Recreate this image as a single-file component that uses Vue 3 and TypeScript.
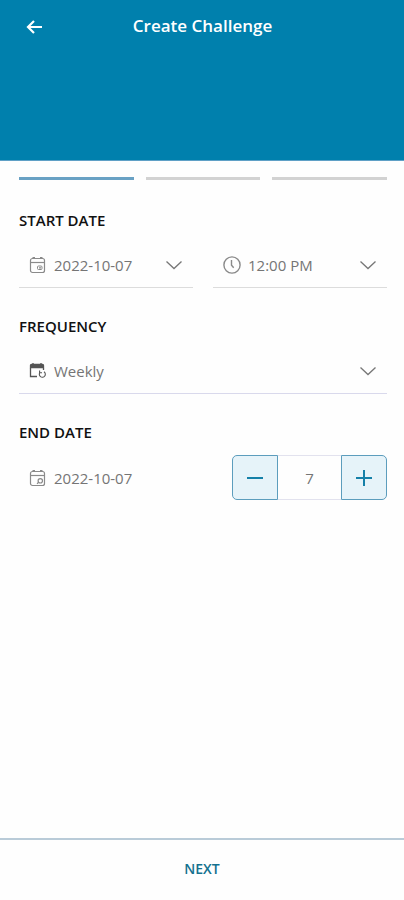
<script setup lang="ts">
import { computed, ref } from 'vue'

const totalSteps = 3
const currentStep = ref<number>(1)

const startDate = ref<string>('2022-10-07')
const startTime = ref<string>('12:00 PM')
const frequency = ref<string>('Weekly')
const endDate = ref<string>('2022-10-07')
const duration = ref<number>(7)

const dates: string[] = ['2022-10-07', '2022-10-08', '2022-10-09']
const times: string[] = ['12:00 PM', '1:00 PM', '2:00 PM']
const frequencies: string[] = ['Daily', 'Weekly', 'Monthly']

const canDecrease = computed<boolean>(() => duration.value > 1)

function changeDuration(amount: number): void {
  duration.value = Math.max(1, duration.value + amount)
}
</script>

<template>
  <div class="screen">
    <header class="header">
      <button class="back" type="button" aria-label="Back">
        <svg width="18" height="16" viewBox="0 0 18 16" fill="none" stroke="currentColor" stroke-width="2.2">
          <path d="M17 8H3M9 2L3 8l6 6" />
        </svg>
      </button>
      <h1 class="title">Create Challenge</h1>
    </header>

    <main class="content">
      <div class="steps" aria-hidden="true">
        <span
          v-for="step in totalSteps"
          :key="step"
          class="step"
          :class="{ active: step === currentStep }"
        ></span>
      </div>

      <section class="group">
        <h2 class="heading">START DATE</h2>
        <div class="fields">
          <label class="field">
            <svg class="icon" width="18" height="18" viewBox="0 0 18 18" fill="none" stroke="currentColor" stroke-width="1.2">
              <rect x="1.5" y="2.5" width="14" height="14" rx="2" />
              <path d="M1.5 6.5h14" />
              <path d="M3.5 2h2.5M11 2h2.5" stroke-width="2" />
              <rect x="8.5" y="10" width="4.5" height="3.5" rx="1" stroke-width="1" />
              <path d="M10 11.8h2" />
            </svg>
            <select v-model="startDate" class="select" aria-label="Start date">
              <option v-for="date in dates" :key="date">{{ date }}</option>
            </select>
            <svg class="chevron" width="18" height="10" viewBox="0 0 18 10" fill="none" stroke="currentColor" stroke-width="1.3">
              <path d="M1.5 1.5L9 8.5l7.5-7" />
            </svg>
          </label>
          <label class="field">
            <svg class="icon" width="18" height="18" viewBox="0 0 18 18" fill="none" stroke="currentColor" stroke-width="1.4">
              <circle cx="9" cy="9" r="8.1" />
              <path d="M8.5 4v5.2l2.2 2.6" />
            </svg>
            <select v-model="startTime" class="select" aria-label="Start time">
              <option v-for="time in times" :key="time">{{ time }}</option>
            </select>
            <svg class="chevron" width="18" height="10" viewBox="0 0 18 10" fill="none" stroke="currentColor" stroke-width="1.3">
              <path d="M1.5 1.5L9 8.5l7.5-7" />
            </svg>
          </label>
        </div>
      </section>

      <section class="group">
        <h2 class="heading">FREQUENCY</h2>
        <div class="fields">
          <label class="field tinted">
            <svg class="icon dark" width="18" height="18" viewBox="0 0 18 18" fill="none" stroke="currentColor" stroke-width="1.3">
              <path d="M1.5 5.5v-2a1 1 0 0 1 1-1h11a1 1 0 0 1 1 1v2z" fill="currentColor" />
              <path d="M4 1v2M12 1v2M1.5 6v8.5h6.5M14.5 6v2" />
              <path d="M11 10.4a3 3 0 1 0 4-.6M10.6 8.4v2.4h2.4" stroke-width="1.1" />
            </svg>
            <select v-model="frequency" class="select" aria-label="Frequency">
              <option v-for="item in frequencies" :key="item">{{ item }}</option>
            </select>
            <svg class="chevron" width="18" height="10" viewBox="0 0 18 10" fill="none" stroke="currentColor" stroke-width="1.3">
              <path d="M1.5 1.5L9 8.5l7.5-7" />
            </svg>
          </label>
        </div>
      </section>

      <section class="group">
        <h2 class="heading">END DATE</h2>
        <div class="end">
          <div class="end-date">
            <svg class="icon" width="18" height="18" viewBox="0 0 18 18" fill="none" stroke="currentColor" stroke-width="1.2">
              <rect x="1.5" y="2.5" width="14" height="14" rx="2" />
              <path d="M1.5 6.5h14" />
              <path d="M3.5 2h2.5M11 2h2.5" stroke-width="2" />
              <circle cx="11.3" cy="11.8" r="2.2" />
              <path d="M8 14.8l1.7-1.5" />
            </svg>
            <span>{{ endDate }}</span>
          </div>
          <div class="stepper">
            <button
              class="adjust minus"
              type="button"
              aria-label="Decrease"
              :disabled="!canDecrease"
              @click="changeDuration(-1)"
            >
              <svg width="16" height="16" viewBox="0 0 16 16" fill="none" stroke="currentColor" stroke-width="2">
                <path d="M0 8h16" />
              </svg>
            </button>
            <input v-model.number="duration" class="amount" type="text" inputmode="numeric" aria-label="Duration" />
            <button class="adjust plus" type="button" aria-label="Increase" @click="changeDuration(1)">
              <svg width="16" height="16" viewBox="0 0 16 16" fill="none" stroke="currentColor" stroke-width="2">
                <path d="M0 8h16M8 0v16" />
              </svg>
            </button>
          </div>
        </div>
      </section>
    </main>

    <footer class="footer">
      <button class="next" type="button">NEXT</button>
    </footer>
  </div>
</template>

<style>
body {
  margin: 0;
  background: #fff;
}
</style>

<style scoped>
.screen {
  display: flex;
  flex-direction: column;
  min-height: 100vh;
  background: #fefefe;
  color: #757575;
  font-family: 'Open Sans', 'Noto Sans', sans-serif;
  font-size: 15px;
}

.screen *,
.screen {
  box-sizing: border-box;
}

button,
input,
select {
  margin: 0;
  padding: 0;
  border: 0;
  border-radius: 0;
  background: none;
  color: inherit;
  font: inherit;
}

button,
select {
  cursor: pointer;
}

svg {
  display: block;
  flex: none;
}

.header {
  display: grid;
  grid-template-columns: 32px 1fr 32px;
  align-items: start;
  height: 161px;
  padding: 10px 17px 10px 18px;
  border-bottom: 1px solid #5fa0c6;
  background: #0080ad;
  color: #fff;
}

.back {
  display: flex;
  align-items: center;
  justify-content: center;
  height: 34px;
}

.title {
  margin: 0;
  font-size: 17px;
  font-weight: 600;
  line-height: 32px;
  text-align: center;
}

.content {
  display: flex;
  flex: 1;
  flex-direction: column;
  gap: 28px;
  padding: 16px 17px 28px 19px;
}

.steps {
  display: flex;
  gap: 12px;
  padding-bottom: 2px;
}

.step {
  flex: 1;
  height: 3px;
  background: #d2d2d2;
}

.step.active {
  background: #69a1c4;
}

.group {
  display: flex;
  flex-direction: column;
  gap: 13px;
}

.heading {
  margin: 0;
  color: #111;
  font-size: 15px;
  font-weight: 600;
  line-height: 20px;
}

.fields {
  display: flex;
  gap: 20px;
}

.field {
  display: flex;
  flex: 1;
  align-items: center;
  gap: 7px;
  min-width: 0;
  height: 45px;
  padding: 0 10px;
  border-bottom: 1px solid #dcdcdc;
}

.field.tinted {
  border-bottom-color: #d9d9ec;
}

.icon {
  color: #8a8a8a;
}

.icon.dark {
  color: #555;
}

.select {
  flex: 1;
  min-width: 0;
  height: 100%;
  appearance: none;
}

.chevron {
  color: #777;
  pointer-events: none;
}

.end {
  display: flex;
  align-items: center;
  justify-content: space-between;
}

.end-date {
  display: flex;
  align-items: center;
  gap: 7px;
  padding-left: 10px;
}

.stepper {
  display: flex;
  height: 45px;
}

.adjust {
  display: flex;
  align-items: center;
  justify-content: center;
  width: 46px;
  border: 1px solid #5c9dbd;
  background: #e6f3f9;
  color: #1580a8;
}

.minus {
  border-radius: 5px 0 0 5px;
}

.plus {
  border-radius: 0 5px 5px 0;
}

.amount {
  width: 63px;
  border: solid #e2e2ee;
  border-width: 1px 0;
  text-align: center;
}

.footer {
  display: flex;
  height: 62px;
  padding-bottom: 4px;
  border-top: 2px solid #b9cbd8;
}

.next {
  flex: 1;
  color: #14718f;
  font-size: 14px;
  font-weight: 600;
}
</style>
